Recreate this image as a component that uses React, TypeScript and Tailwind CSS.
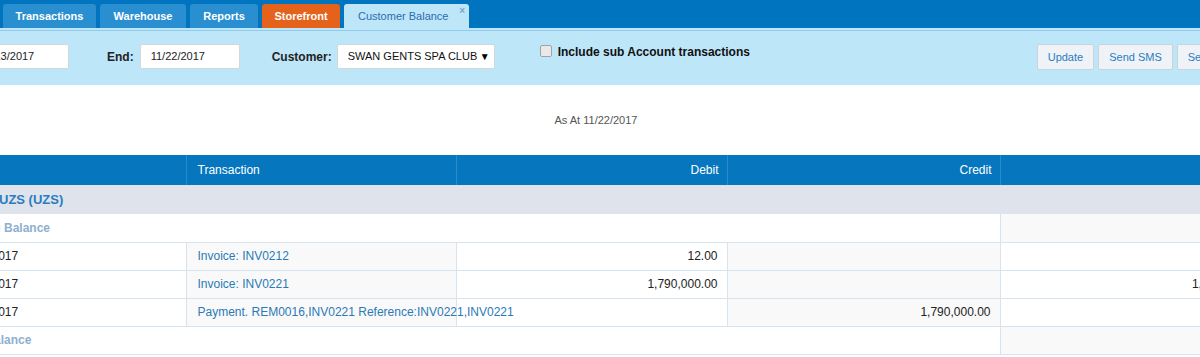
import React from 'react';

const rows = [
  { date: '11/13/2017', tx: 'Invoice: INV0212', debit: '12.00', credit: '', balance: '12.00' },
  { date: '11/22/2017', tx: 'Invoice: INV0221', debit: '1,790,000.00', credit: '', balance: '1,790,012.00' },
  {
    date: '11/22/2017',
    tx: 'Payment. REM0016,INV0221 Reference:INV0221,INV0221',
    debit: '',
    credit: '1,790,000.00',
    balance: '12.00',
  },
];

const tabs = [
  { label: 'Transactions', w: 'w-[93px]', bg: 'bg-[#2a8fd1]' },
  { label: 'Warehouse', w: 'w-[86px]', bg: 'bg-[#2a8fd1]' },
  { label: 'Reports', w: 'w-[68px]', bg: 'bg-[#2a8fd1]' },
  { label: 'Storefront', w: 'w-[78px]', bg: 'bg-[#e4621b]' },
];

export default function App() {
  return (
    <div className="w-[1200px] h-[357px] overflow-hidden bg-white font-['Liberation_Sans',Arial,sans-serif]">
      {/* tab strip */}
      <div className="h-[28px] bg-[#0174bf] flex items-end gap-[4px] pl-[3px]">
        {tabs.map((t) => (
          <div
            key={t.label}
            className={`${t.w} ${t.bg} h-[24px] rounded-t-[3px] flex items-center justify-center text-[11px] font-bold text-white`}
          >
            {t.label}
          </div>
        ))}
        <div className="relative w-[125px] h-[24px] rounded-t-[3px] bg-[#bee6f9] flex items-center pl-[14px] text-[11px] text-[#2a6db0]">
          Customer Balance
          <span className="absolute right-[4px] top-[2px] text-[10px] font-bold text-[#7aa6d0] leading-none">×</span>
        </div>
      </div>

      {/* filter panel */}
      <div className="h-[57px] bg-[#bee6f9]">
        <div className="h-[2px]" />
        <div className="h-px bg-[#93cbee]" />
        <div className="-ml-[31px] w-[1320px] flex items-start pt-[13px]">
          <div className="w-[100px] h-[25px] bg-white border border-[#d3d8dc] rounded-[2px] flex items-center pl-[10px] text-[11px] text-[#222]">
            11/13/2017
          </div>
          <div className="ml-[38px] h-[25px] flex items-center text-[12px] font-bold text-[#222]">End:</div>
          <div className="ml-[6px] w-[100px] h-[25px] bg-white border border-[#d3d8dc] rounded-[2px] flex items-center pl-[10px] text-[11px] text-[#222]">
            11/22/2017
          </div>
          <div className="ml-[32px] h-[25px] flex items-center text-[12px] font-bold text-[#222]">Customer:</div>
          <div className="ml-[5px] w-[158px] h-[25px] bg-white border border-[#d3d8dc] rounded-[2px] flex items-center justify-between pl-[10px] pr-[4px] text-[11px] text-[#111]">
            <span>SWAN GENTS SPA CLUB</span>
            <span className="text-[10px] text-black">▼</span>
          </div>
          <div className="ml-[45px] w-[212px] flex items-start gap-[6px] pt-px">
            <div className="w-[12px] h-[12px] rounded-[2px] border border-[#a3a3a3] bg-[#e9e9e9]" />
            <span className="text-[12px] font-bold text-[#111] leading-[12px] mt-px">Include sub Account transactions</span>
          </div>
          <div className="ml-[285px] flex gap-[4px]">
            {['Update', 'Send SMS', 'Send Email'].map((b) => (
              <div
                key={b}
                className="h-[26px] px-[10px] bg-[#eff3f7] border border-[#cbd3da] rounded-[2px] flex items-center text-[11px] text-[#2a7cc0]"
              >
                {b}
              </div>
            ))}
          </div>
        </div>
      </div>

      {/* report caption */}
      <div className="h-[70px] flex items-center justify-center pr-[8px] text-[11px] text-[#555]">
        As At 11/22/2017
      </div>

      {/* ledger */}
      <div className="-ml-[64px]">
        <table className="table-fixed border-collapse w-[1334px] text-[12px]">
          <colgroup>
            <col className="w-[250px]" />
            <col className="w-[270px]" />
            <col className="w-[271px]" />
            <col className="w-[273px]" />
            <col className="w-[270px]" />
          </colgroup>
          <thead>
            <tr className="h-[30px] bg-[#0677be] text-white">
              <th className="font-normal text-left pl-[23px]">Date</th>
              <th className="font-normal text-left pl-[11px] border-l border-[#2a8bcb]">Transaction</th>
              <th className="font-normal text-right pr-[8px] border-l border-[#2a8bcb]">Debit</th>
              <th className="font-normal text-right pr-[8px] border-l border-[#2a8bcb]">Credit</th>
              <th className="font-normal text-right pr-[8px] border-l border-[#2a8bcb]">Balance</th>
            </tr>
          </thead>
          <tbody>
            <tr className="h-[29px] bg-[#dfe4ec]">
              <td colSpan={5} className="pl-[63px] text-[13px] font-bold text-[#2a7cc0]">
                UZS (UZS)
              </td>
            </tr>
            <tr className="h-[28px] border-b border-[#d6e4f0]">
              <td colSpan={4} className="pl-[16px] font-bold text-[#8eb0cf] whitespace-nowrap">
                Opening Balance
              </td>
              <td className="bg-[#f9f9f9] border-l border-[#d6e4f0]" />
            </tr>
            {rows.map((r, i) => (
              <tr key={i} className="h-[28px] border-b border-[#d6e4f0] text-[#222]">
                <td className="pl-[23px] whitespace-nowrap">{r.date}</td>
                <td className="bg-[#f9f9f9] border-l border-[#d6e4f0] pl-[11px] text-[#2a7ab8] whitespace-nowrap overflow-visible">
                  {r.tx}
                </td>
                <td className="border-l border-[#d6e4f0] text-right pr-[9px]">{r.debit}</td>
                <td className="bg-[#f9f9f9] border-l border-[#d6e4f0] text-right pr-[9px]">{r.credit}</td>
                <td className="border-l border-[#d6e4f0] text-right pr-[8px]">{r.balance}</td>
              </tr>
            ))}
            <tr className="h-[28px] border-b border-[#d6e4f0]">
              <td colSpan={4} className="pl-[2px] font-bold text-[#8eb0cf] whitespace-nowrap">
                Closing Balance
              </td>
              <td className="bg-[#f9f9f9] border-l border-[#d6e4f0]" />
            </tr>
          </tbody>
        </table>
      </div>
    </div>
  );
}
